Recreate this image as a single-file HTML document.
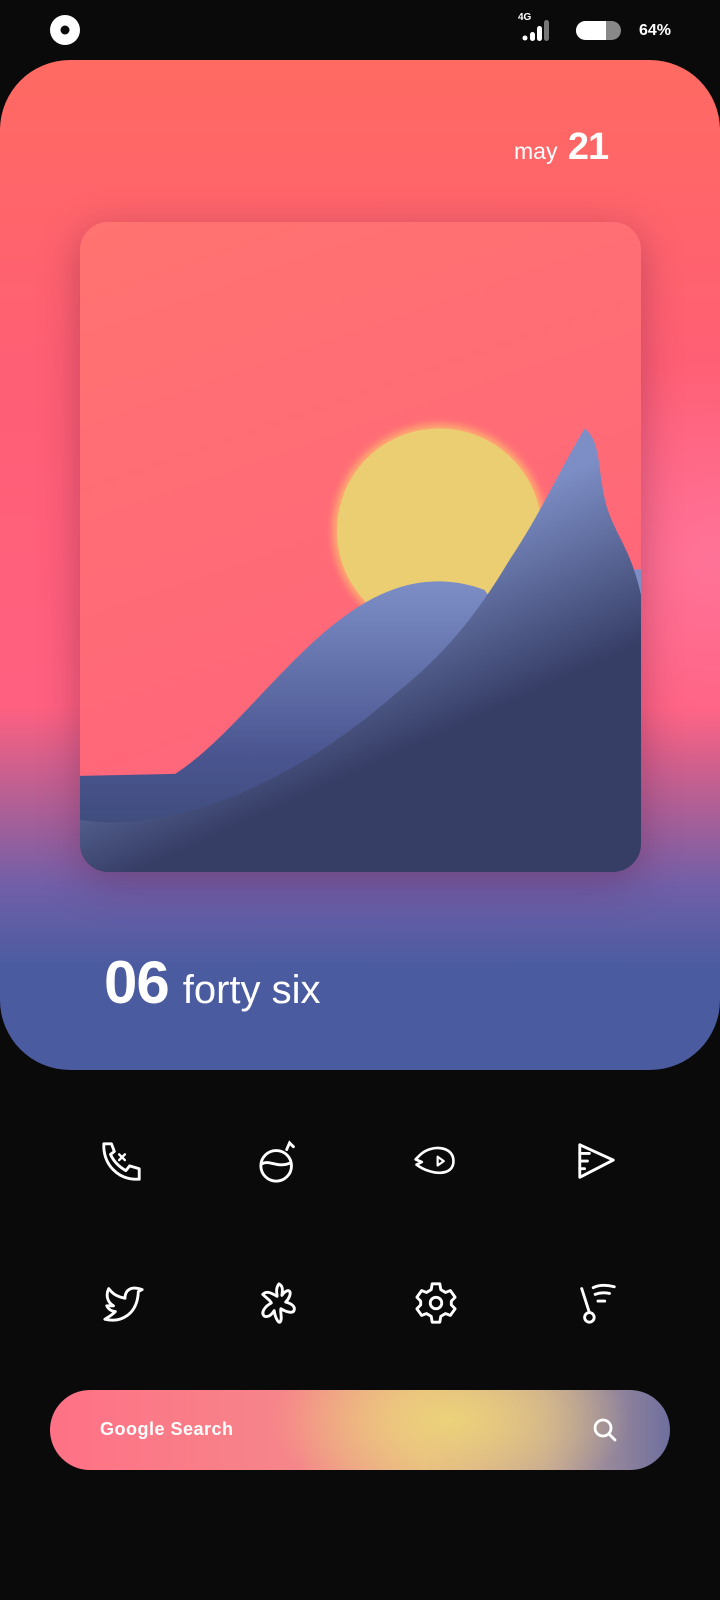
<!DOCTYPE html>
<html><head><meta charset="utf-8"><style>
*{margin:0;padding:0;box-sizing:border-box}
body{width:720px;height:1600px;background:#0a0a0a;position:relative;overflow:hidden;font-family:"Liberation Sans",sans-serif;color:#fff}
.w{position:absolute;left:0;top:60px;width:720px;height:1010px;border-radius:70px;overflow:hidden;
background:radial-gradient(ellipse 260px 200px at 720px 500px,rgba(255,120,160,.8),transparent),
linear-gradient(180deg,#ff6a62 0%,#ff5f74 30%,#ff6080 64%,#6f5fa8 82%,#4a5ba0 90%,#4a5ba0 100%)}
.card{position:absolute;left:80px;top:162px;width:561px;height:650px;border-radius:28px;overflow:hidden;box-shadow:0 10px 40px rgba(80,20,60,.35)}
.ic{position:absolute;width:44px;height:44px}
</style></head><body>
<svg style="position:absolute;left:49px;top:14px" width="32" height="32"><circle cx="16" cy="16" r="15" fill="#fff"/><circle cx="16" cy="16" r="4.5" fill="#0a0a0a"/></svg>
<div style="position:absolute;left:518px;top:12px;font-size:10px;font-weight:bold">4G</div>
<svg style="position:absolute;left:522px;top:20px" width="34" height="22"><circle cx="3" cy="18" r="2.5" fill="#fff"/><rect x="8" y="12" width="5" height="9" rx="2.5" fill="#fff"/><rect x="15" y="6" width="5" height="15" rx="2.5" fill="#fff"/><rect x="22" y="0" width="5" height="21" rx="2.5" fill="#777"/></svg>
<svg style="position:absolute;left:576px;top:21px" width="46" height="20"><rect width="45" height="19" rx="9.5" fill="#888"/><path d="M9.5 0H30V19H9.5A9.5 9.5 0 0 1 9.5 0Z" fill="#fff"/></svg>
<div style="position:absolute;left:639px;top:22px;font-size:16px;font-weight:bold">64%</div>
<div class="w">
<div style="position:absolute;left:514px;top:66px;font-size:23px">may <span style="font-size:38px;font-weight:bold;letter-spacing:-1px;margin-left:4px">21</span></div>
<div class="card"><svg width="561" height="650" viewBox="0 0 548 636" preserveAspectRatio="none">
<defs><linearGradient id="sky" x1="0" y1="0" x2="0.3" y2="1"><stop offset="0" stop-color="#ff7370"/><stop offset="1" stop-color="#ff647c"/></linearGradient>
<linearGradient id="m1" x1="0" y1="0" x2="0" y2="1"><stop offset="0" stop-color="#7d8ec6"/><stop offset="0.6" stop-color="#4a5590"/><stop offset="1" stop-color="#384670"/></linearGradient>
<linearGradient id="m2" x1="0.6" y1="0.25" x2="0.8" y2="0.6"><stop offset="0" stop-color="#7d8ec6"/><stop offset="1" stop-color="#363e66"/></linearGradient>
<filter id="g"><feGaussianBlur stdDeviation="4"/></filter></defs>
<rect width="548" height="636" fill="url(#sky)"/>
<circle cx="351" cy="302" r="104" fill="#ffb070" filter="url(#g)"/>
<circle cx="351" cy="302" r="100" fill="#ecce72"/>
<path d="M548 340V420L530 340Z" fill="#7d8ec6"/>
<path d="M0 542L93 540C170 490 240 360 340 352C365 350 385 356 395 360L548 560V636H0Z" fill="url(#m1)"/>
<path d="M0 585C100 600 220 540 310 460C360 420 390 380 420 330C450 285 470 240 493 202C510 215 505 245 515 280C525 310 538 320 548 365V636H0Z" fill="url(#m2)"/>
</svg></div>
<div style="position:absolute;left:104px;top:888px;font-size:60px;font-weight:bold;letter-spacing:-1px">06<span style="font-size:40px;font-weight:normal;letter-spacing:0;margin-left:14px">forty six</span></div>
</div>
<svg class="ic" style="left:100px;top:1140px" viewBox="0 0 46 46" fill="none" stroke="#fff" stroke-width="3" stroke-linecap="round" stroke-linejoin="round">
<path d="M4 4H12L15 12L11 15C14 22 20 28 27 32L31 27L41 30V41H36C18 40 5 26 4 8Z"/><path d="M20 15L26 21M26 15L20 21" stroke-width="2.5"/></svg>
<svg class="ic" style="left:258px;top:1140px" viewBox="0 0 46 46" fill="none" stroke="#fff" stroke-width="3" stroke-linecap="round"><circle cx="19" cy="27" r="16"/><path d="M4 25C12 20 20 30 34 24M30 10L33 3L37 7"/></svg>
<svg class="ic" style="left:413px;top:1140px" viewBox="0 0 50 46" fill="none" stroke="#fff" stroke-width="3" stroke-linejoin="round"><path d="M3 20L8 15C20 3 46 4 46 22C46 40 20 38 4 26L10 23Z"/><path d="M28 17V27L35 22Z" stroke-width="2.5"/></svg>
<svg class="ic" style="left:575px;top:1140px" viewBox="0 0 46 46" fill="none" stroke="#fff" stroke-width="3" stroke-linecap="round" stroke-linejoin="round"><path d="M5 5V39L40 21Z"/><path d="M5 14H15M5 22H13M5 30H10"/></svg>
<svg class="ic" style="left:102px;top:1281px" viewBox="0 0 46 46" fill="none" stroke="#fff" stroke-width="3" stroke-linejoin="round"><path d="M3 40C20 44 37 35 38 11L42 9C36 7 30 6 26 11C24 14 24 16 24 18C14 16 10 12 7 8C4 14 5 22 12 26L5 26C8 32 14 32 14 32C10 36 6 38 3 40Z"/></svg>
<svg class="ic" style="left:257px;top:1281px" viewBox="0 0 46 46" fill="none" stroke="#fff" stroke-width="3" stroke-linejoin="round"><path d="M23 3C19 8 21 13 21 16C17 14 11 9 6 14C10 18 14 20 15 23C9 26 3 33 8 37C13 38 16 34 18 31C19 38 22 44 24 43C27 40 24 33 25 29C30 32 38 35 39 30C40 24 30 22 30 22C33 19 37 12 33 10C29 10 27 14 26 15C27 9 27 5 23 3Z"/></svg>
<svg class="ic" style="left:414px;top:1281px" viewBox="0 0 46 46" fill="none" stroke="#fff" stroke-width="3" stroke-linejoin="round"><path d="M19 3H27L28 9L33 12L38 10L43 17L39 21V25L43 29L38 36L33 34L28 37L27 43H19L18 37L13 34L8 36L3 29L7 25V21L3 17L8 10L13 12L18 9Z"/><circle cx="23" cy="23" r="6"/></svg>
<svg class="ic" style="left:576px;top:1281px" viewBox="0 0 46 46" fill="none" stroke="#fff" stroke-width="3" stroke-linecap="round"><circle cx="14" cy="38" r="5"/><path d="M14 33L6 8M18 7C24 4 32 4 40 6M20 14C25 12 30 12 35 13M23 21H30"/></svg>
<div style="position:absolute;left:50px;top:1390px;width:620px;height:80px;border-radius:40px;background:radial-gradient(ellipse 180px 90px at 400px 30px,#ecd27a,transparent),linear-gradient(90deg,#ff7186 0%,#f5868a 40%,#e8b386 60%,#c0a298 80%,#6f6f9e 100%)"></div>
<div style="position:absolute;left:100px;top:1419px;font-size:18px;font-weight:bold;letter-spacing:.5px">Google Search</div>
<svg style="position:absolute;left:592px;top:1417px" width="26" height="26" fill="none" stroke="#fff" stroke-width="2.8" stroke-linecap="round"><circle cx="11" cy="11" r="8"/><path d="M17 17L23 23"/></svg>
</body></html>
